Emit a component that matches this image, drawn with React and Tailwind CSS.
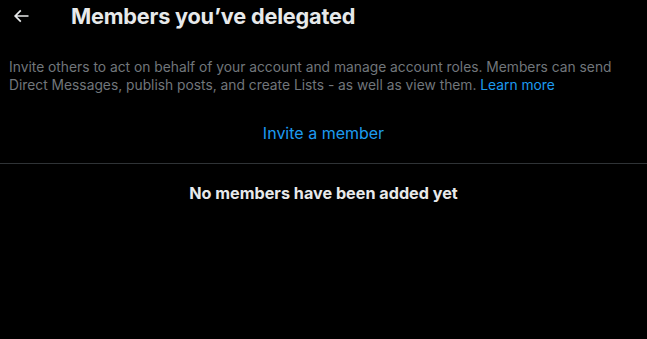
import React from 'react';

export default function App() {
  return (
    <div className="min-h-[339px] w-[647px] bg-black text-[#e7e9ea]" style={{ fontFamily: 'Inter, "Noto Sans", sans-serif' }}>
      <div className="flex h-[32px] items-center">
        <div className="flex w-[71px] items-center pl-[11px]">
          <svg viewBox="0 0 24 24" className="h-[20px] w-[20px]" fill="#e7e9ea">
            <path d="M7.414 13l5.043 5.04-1.414 1.42L3.586 12l7.457-7.46 1.414 1.42L7.414 11H21v2H7.414z" />
          </svg>
        </div>
        <h2 className="text-[21.7px] leading-[24px] font-bold tracking-[-0.2px]">Members you’ve delegated</h2>
      </div>
      <p className="mt-[26px] px-[9px] text-[13.8px] leading-[18px] text-[#71767b]">
        Invite others to act on behalf of your account and manage account roles. Members can send Direct Messages, publish posts, and create Lists - as well as view them. <span className="text-[#1d9bf0]">Learn more</span>
      </p>
      <div className="flex justify-center pt-[29px] pb-[20px] text-[16px] leading-[20px] text-[#1d9bf0]">Invite a member</div>
      <div className="h-px bg-[#2f3336]" />
      <div className="pt-[19px] text-center text-[16.2px] leading-[20px] font-bold">No members have been added yet</div>
    </div>
  );
}
